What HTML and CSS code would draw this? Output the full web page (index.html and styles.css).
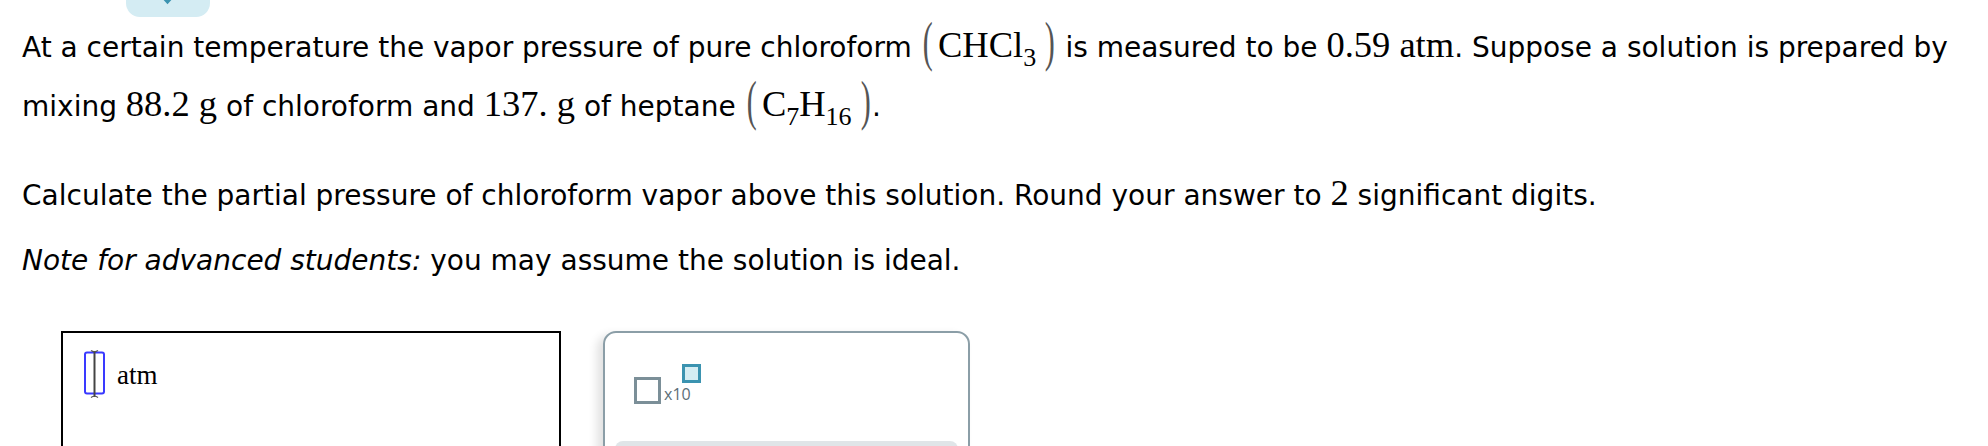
FILE: index.html
```html
<!DOCTYPE html>
<html>
<head>
<meta charset="utf-8">
<link rel="stylesheet" href="styles.css">
</head>
<body>
<div class="badge"><svg class="chev" width="84" height="17" viewBox="0 0 84 17"><path d="M36 -4 L41.5 2 L47 -4" fill="none" stroke="#3b93b0" stroke-width="3" stroke-linecap="round"/></svg></div>
<div class="question">
  <p class="q p1"><span>At a certain temperature the vapor pressure of pure chloroform</span> <span class="m"><span class="par po">(</span>CHCl<sub>3</sub><span class="par pc">)</span></span> <span>is measured to be</span> <span class="m">0.59 atm</span><span>. Suppose a solution is prepared by</span><br><span>mixing</span> <span class="m">88.2 g</span> <span>of chloroform and</span> <span class="m">137. g</span> <span>of heptane</span> <span class="m"><span class="par po">(</span>C<sub>7</sub>H<sub>16</sub><span class="par pc">)</span></span>.</p>
  <p class="q p2">Calculate the partial pressure of chloroform vapor above this solution. Round your answer to <span class="m">2</span> significant digits.</p>
  <p class="q p3"><em>Note for advanced students:</em> you may assume the solution is ideal.</p>
</div>
<div class="answer">
  <div class="ansbox">
    <svg class="cursor" width="21" height="48" viewBox="0 0 21 48">
      <rect x="1" y="2.5" width="19" height="41" rx="2" fill="none" stroke="#3a3aff" stroke-width="2"/>
      <path d="M10.5 1 V47" stroke="#444" stroke-width="2"/>
      <path d="M7 0.5 Q10.5 3 14 0.5 M7 47.5 Q10.5 45 14 47.5" fill="none" stroke="#555" stroke-width="1.2"/>
    </svg>
    <span class="unit">atm</span>
  </div>
  <div class="panel">
    <div class="sci">
      <span class="sq"></span>
      <span class="x10">x10</span>
      <span class="sup"></span>
    </div>
    <div class="bar"></div>
  </div>
</div>
</body>
</html>
```

FILE: styles.css
```css
html, body {
  margin: 0;
  padding: 0;
  background: #fff;
  overflow: hidden;
}
body {
  font-family: "DejaVu Sans", Verdana, sans-serif;
  font-size: 28px;
  color: #000;
}
.badge {
  width: 84px;
  height: 17px;
  margin-left: 126px;
  background: #d4ecf3;
  border-radius: 0 0 14px 14px;
  overflow: hidden;
}
.chev { display: block; }
.question {
  padding: 0 22px;
}
.q { margin: 0; }
.p1 {
  line-height: 59px;
  margin-top: 1.3px;
}
.p2 {
  line-height: 40px;
  margin-top: 39.5px;
}
.p3 {
  line-height: 40px;
  margin-top: 25.5px;
}
.m {
  font-family: "Liberation Serif", "Times New Roman", serif;
  font-size: 36.5px;
  line-height: 34px;
}
.m sub {
  font-size: 26px;
  vertical-align: -9px;
  line-height: 20px;
}
.par {
  display: inline-block;
  font-size: 40px;
  line-height: 34px;
  color: #555;
  transform: scale(0.75, 1.35);
  transform-origin: 50% 60%;
}
.po { margin: 0 4px 0 0; }
.pc { margin: 0 0 0 7px; }
.answer {
  display: flex;
  align-items: flex-start;
  margin-top: 49.4px;
  padding-left: 61px;
  gap: 41.5px;
}
.ansbox {
  width: 500px;
  height: 200px;
  box-sizing: border-box;
  border: 2px solid #000;
  padding: 17px 0 0 21px;
  display: flex;
  align-items: flex-start;
}
.cursor { display: block; }
.unit {
  font-family: "Liberation Serif", "Times New Roman", serif;
  font-size: 27px;
  line-height: 27px;
  margin-left: 12px;
  margin-top: 12px;
}
.panel {
  width: 367px;
  height: 200px;
  box-sizing: border-box;
  border: 2px solid #8b9ea7;
  border-radius: 13px;
  padding: 0 10px;
  box-shadow: -6px 4px 10px rgba(0, 0, 0, 0.12);
}
.sci {
  display: flex;
  align-items: flex-start;
  padding-top: 31px;
  padding-left: 19.5px;
}
.sq {
  width: 27px;
  height: 27px;
  box-sizing: border-box;
  border: 3px solid #7b8f98;
  margin-top: 13px;
}
.x10 {
  font-family: "Open Sans", sans-serif;
  font-size: 16px;
  line-height: 16px;
  color: #5b6e77;
  margin-left: 3px;
  margin-top: 22px;
}
.sup {
  width: 19px;
  height: 19px;
  box-sizing: border-box;
  border: 3px solid #3b93b0;
  background: #d5edf3;
  margin-left: -9px;
}
.bar {
  margin-top: 37px;
  height: 60px;
  background: #e0e5e8;
  border-radius: 8px;
}
```
